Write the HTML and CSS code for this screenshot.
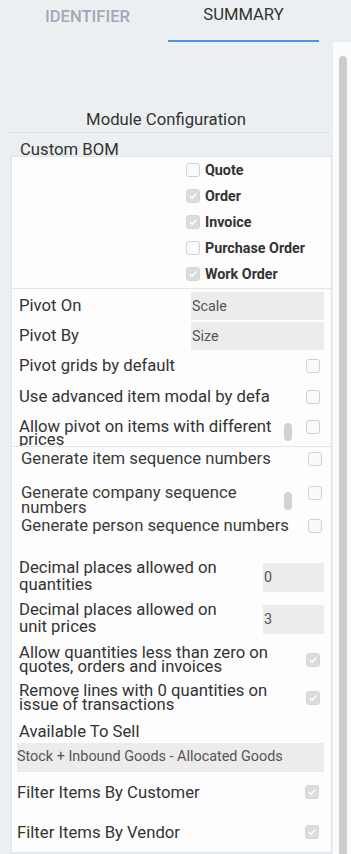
FILE: index.html
```html
<!DOCTYPE html>
<html>
<head>
<meta charset="utf-8">
<link rel="stylesheet" href="styles.css">
</head>
<body>
<div class="tabs">
  <div class="tab tab-muted">IDENTIFIER</div>
  <div class="tab tab-active">SUMMARY</div>
</div>
<div class="main">
  <div class="content">
    <div class="module-title">Module Configuration</div>
    <div class="group-title">Custom BOM</div>
    <div class="card">
      <div class="doc-list">
        <div class="doc-item"><span class="cb"></span><span>Quote</span></div>
        <div class="doc-item"><span class="cb cb-on"><svg viewBox="0 0 14 14"><path d="M3.3 7.3 L5.9 9.8 L10.7 4.4"/></svg></span><span>Order</span></div>
        <div class="doc-item"><span class="cb cb-on"><svg viewBox="0 0 14 14"><path d="M3.3 7.3 L5.9 9.8 L10.7 4.4"/></svg></span><span>Invoice</span></div>
        <div class="doc-item"><span class="cb"></span><span>Purchase Order</span></div>
        <div class="doc-item"><span class="cb cb-on"><svg viewBox="0 0 14 14"><path d="M3.3 7.3 L5.9 9.8 L10.7 4.4"/></svg></span><span>Work Order</span></div>
      </div>
      <div class="pivot">
        <div class="field-row"><span class="lbl">Pivot On</span><span class="input input-wide">Scale</span></div>
        <div class="field-row"><span class="lbl">Pivot By</span><span class="input input-wide">Size</span></div>
        <div class="check-row"><span class="lbl">Pivot grids by default</span><span class="cb"></span></div>
        <div class="check-row"><span class="lbl lbl-clip">Use advanced item modal by defa</span><span class="cb"></span></div>
        <div class="check-row check-row-tall"><span class="lbl lbl-tight">Allow pivot on items with different prices</span><span class="mini-thumb thumb-a"></span><span class="cb"></span></div>
      </div>
      <div class="sequence">
        <div class="seq-row seq-row-a"><span class="seq-lbl">Generate item sequence numbers</span><span class="cb"></span></div>
        <div class="seq-row seq-row-b"><span class="seq-lbl">Generate company sequence numbers</span><span class="mini-thumb thumb-b"></span><span class="cb"></span></div>
        <div class="seq-row seq-row-c"><span class="seq-lbl">Generate person sequence numbers</span><span class="cb"></span></div>
      </div>
      <div class="decimals">
        <div class="num-row"><span class="num-lbl">Decimal places allowed on quantities</span><span class="input input-small">0</span></div>
        <div class="num-row"><span class="num-lbl">Decimal places allowed on unit prices</span><span class="input input-small">3</span></div>
        <div class="qty-row qty-row-a"><span class="qty-lbl">Allow quantities less than zero on quotes, orders and invoices</span><span class="cb cb-on"><svg viewBox="0 0 14 14"><path d="M3.3 7.3 L5.9 9.8 L10.7 4.4"/></svg></span></div>
        <div class="qty-row qty-row-b"><span class="qty-lbl">Remove lines with 0 quantities on issue of transactions</span><span class="cb cb-on"><svg viewBox="0 0 14 14"><path d="M3.3 7.3 L5.9 9.8 L10.7 4.4"/></svg></span></div>
      </div>
      <div class="sell">
        <div class="sell-lbl">Available To Sell</div>
        <div class="sell-box">Stock + Inbound Goods - Allocated Goods</div>
        <div class="filter-row"><span class="filter-lbl">Filter Items By Customer</span><span class="cb cb-on"><svg viewBox="0 0 14 14"><path d="M3.3 7.3 L5.9 9.8 L10.7 4.4"/></svg></span></div>
        <div class="filter-row"><span class="filter-lbl">Filter Items By Vendor</span><span class="cb cb-on"><svg viewBox="0 0 14 14"><path d="M3.3 7.3 L5.9 9.8 L10.7 4.4"/></svg></span></div>
      </div>
    </div>
  </div>
  <div class="scroll"><div class="scroll-thumb"></div></div>
</div>
</body>
</html>
```

FILE: styles.css
```css
* { box-sizing: border-box; }
html, body { margin: 0; padding: 0; }
body {
  background: #eceff1;
  font-family: Roboto, "Liberation Sans", sans-serif;
  color: #333;
  width: 351px;
  height: 854px;
  overflow: hidden;
}

.tabs { display: flex; height: 42px; }
.tab { font-size: 16.6px; line-height: 20px; text-align: center; height: 42px; }
.tab-muted { width: 168px; padding: 7px 0 0 7px; color: #a2a8b7; font-weight: 500; }
.tab-active { width: 151px; padding-top: 5px; color: #333; border-bottom: 2px solid #4a96e0; }

.main { display: flex; height: 812px; }
.content { width: 333px; }
.scroll { width: 18px; background: #fbfbfb; padding: 14px 0 0 6px; }
.scroll-thumb { width: 8px; height: 100%; background: #cdcdcd; border-radius: 4px 4px 0 0; }

.module-title {
  margin: 68px 3px 0 9px;
  padding: 0 7px 2px 0;
  font-size: 16.7px;
  line-height: 20px;
  text-align: center;
  border-bottom: 1px solid #dde1e4;
}
.group-title {
  height: 23px;
  padding: 8px 0 0 20px;
  font-size: 16.7px;
  line-height: 18px;
}

.card {
  margin-left: 11px;
  width: 321px;
  background: #fdfdfd;
  border: 1px solid #dfe3e6;
}

.cb {
  flex: none;
  width: 14px;
  height: 14px;
  border: 1px solid #d0d0d0;
  border-radius: 3px;
  background: #fafafa;
  display: inline-flex;
}
.cb-on { background: #dcdcdc; border-color: #d6d6d6; }
.cb svg { width: 12px; height: 12px; }
.cb svg path { fill: none; stroke: #fff; stroke-width: 1.7; }

.doc-list { padding: 0 0 1px 174px; border-bottom: 1px solid #e3e6e9; }
.doc-item { display: flex; align-items: center; height: 26px; font-size: 14.3px; font-weight: 700; color: #333; }
.doc-item .cb { margin-right: 5px; }

.pivot { padding: 3px 7px 0 7px; border-bottom: 1px solid #e3e6e9; }
.field-row { display: flex; align-items: center; height: 28px; }
.field-row + .field-row { margin-top: 2px; }
.lbl { font-size: 16.7px; line-height: 18px; color: #333; }
.input { background: #ececec; font-size: 14.3px; color: #555; display: flex; align-items: center; padding-left: 1px; margin-left: auto; }
.input-wide { width: 133px; height: 28px; }
.check-row { position: relative; display: flex; align-items: center; height: 31px; padding-right: 4px; }
.check-row .cb { margin-left: auto; }
.lbl-clip { white-space: nowrap; overflow: hidden; }
.check-row-tall { height: 34px; align-items: flex-start; padding-top: 8px; overflow: hidden; }
.lbl-tight { width: 262px; line-height: 13px; }
.mini-thumb { position: absolute; width: 8px; height: 18px; border-radius: 4px; background: #d2d2d2; }
.thumb-a { left: 265px; top: 11px; }

.sequence { padding: 0 9px; }
.seq-row { position: relative; display: flex; align-items: flex-start; }
.seq-row-a { height: 34px; }
.seq-row-b { height: 33px; }
.seq-row-c { height: 42px; }
.seq-lbl { width: 272px; margin-top: 4px; font-size: 16.7px; line-height: 15px; color: #3a3a3a; }
.seq-row .cb { margin: 5px 0 0 auto; }
.thumb-b { left: 263px; top: 11px; }

.decimals { padding: 0 7px; }
.num-row { display: flex; align-items: center; height: 42px; }
.num-lbl { width: 225px; font-size: 16.7px; line-height: 17px; margin-top: -2px; }
.input-small { width: 61px; height: 29px; }
.qty-row { display: flex; align-items: center; padding-right: 4px; }
.qty-row-a { height: 40px; }
.qty-row-b { height: 36px; }
.qty-lbl { width: 268px; font-size: 16.7px; line-height: 14.5px; }
.qty-row .cb { margin-left: auto; }

.sell { padding: 0 7px 0 5px; }
.sell-lbl { margin: 7px 0 2px 2px; font-size: 16.7px; line-height: 18px; }
.sell-box { height: 29px; background: #ececec; font-size: 14.4px; line-height: 27px; color: #555; }
.filter-row { display: flex; align-items: center; height: 40px; padding-right: 5px; }
.filter-lbl { font-size: 16.7px; }
.filter-row .cb { margin-left: auto; }
```
